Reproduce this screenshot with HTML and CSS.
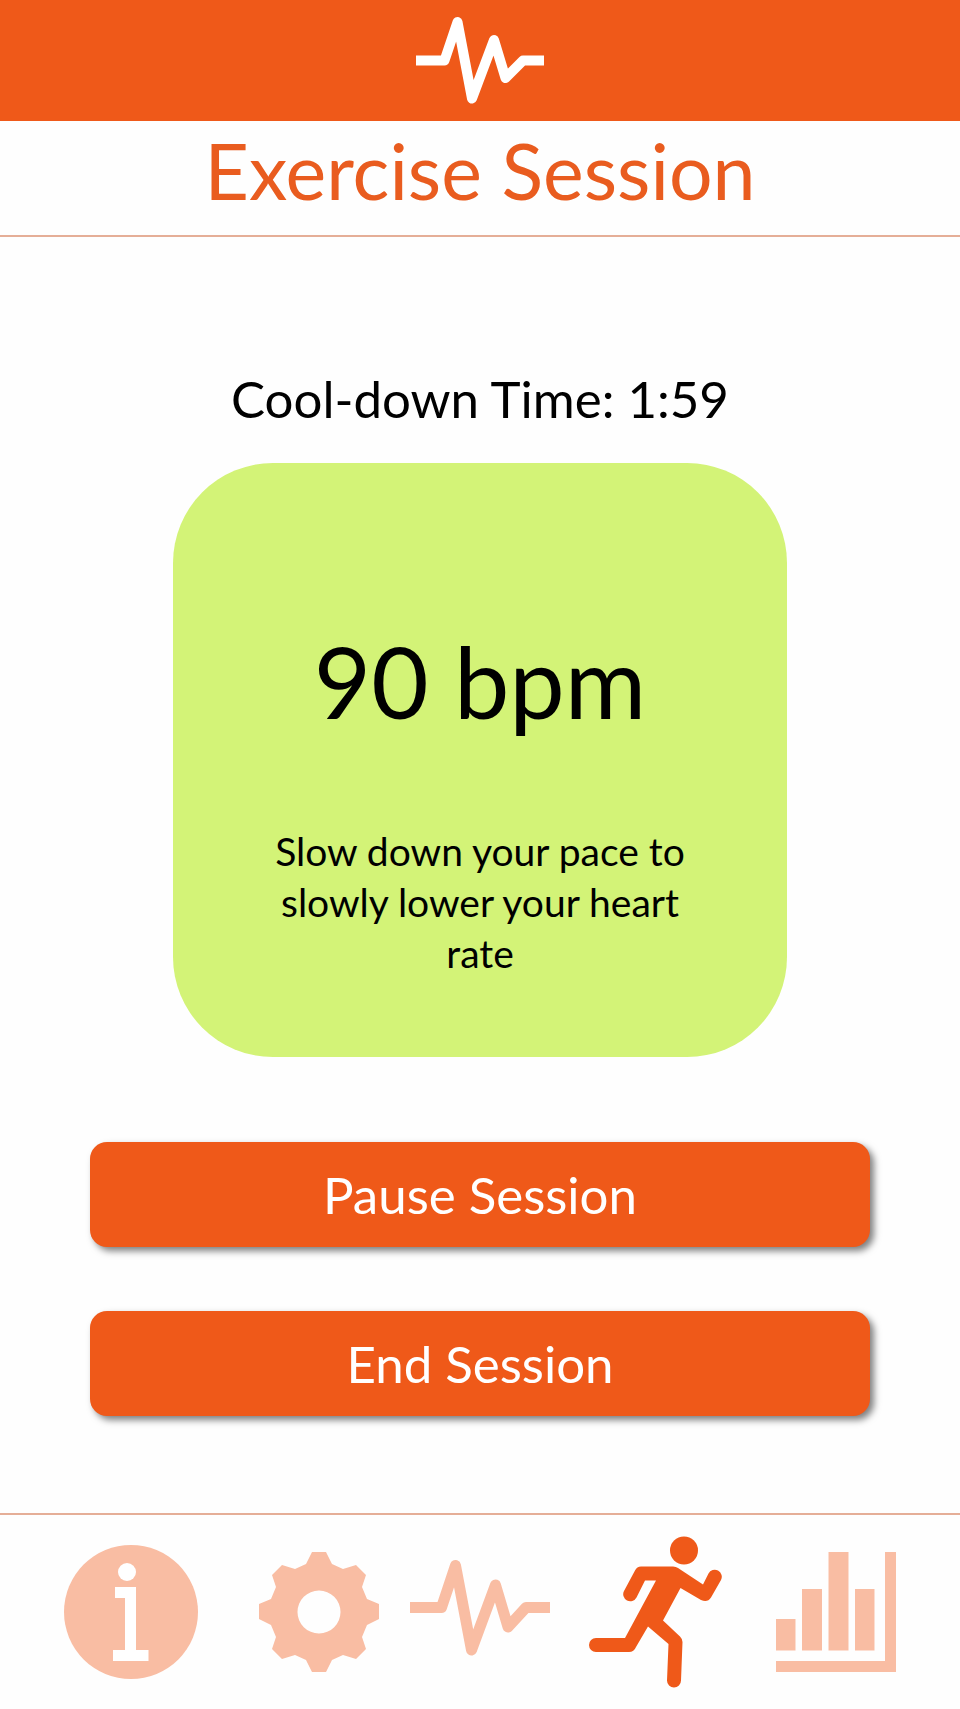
FILE: index.html
```html
<!DOCTYPE html>
<html lang="en">
<head>
<meta charset="utf-8">
<meta name="viewport" content="width=device-width, initial-scale=1">
<title>Exercise Session</title>
<link rel="stylesheet" href="styles.css">
</head>
<body>
<div class="app">
  <header class="brand">
    <svg class="brand-logo" viewBox="0 0 128 88" role="img" aria-label="Heart rate">
      <path d="M0 44H28.500L41.500 5.500L56 82L78 23.500L89.500 61.500L107 44H128" fill="none" stroke="currentColor" stroke-width="10" stroke-linejoin="round"/>
    </svg>
  </header>
  <h1 class="title">Exercise Session</h1>
  <main class="session">
    <p class="timer">Cool-down Time: 1:59</p>
    <section class="card">
      <p class="rate">90 bpm</p>
      <p class="advice">Slow down your pace to slowly lower your heart rate</p>
    </section>
    <div class="actions">
      <button class="action" type="button">Pause Session</button>
      <button class="action" type="button">End Session</button>
    </div>
  </main>
  <nav class="tabs" aria-label="Main">
    <a class="tab" href="#info" aria-label="Information">
      <svg width="134" height="134" viewBox="0 0 134 134">
        <circle cx="67" cy="67" r="67" fill="currentColor"/>
        <circle cx="63" cy="27" r="9" fill="#fff"/>
        <path d="M51 42H72V105H84.500V116H49V105H61V53H51Z" fill="#fff"/>
      </svg>
    </a>
    <a class="tab" href="#settings" aria-label="Settings">
      <svg width="120" height="120" viewBox="0 0 120 120">
        <path fill="currentColor" fill-rule="evenodd" d="M53 0H67L73 12L84 17L97 13L107 23L103 35L108 47L120 52V67L108 73L103 85L107 97L97 107L84 103L73 108L67 120H53L47 108L36 103L23 107L13 97L17 85L12 73L0 67V52L12 47L17 35L13 23L23 13L36 17L47 12ZM60 38.500A21.500 21.500 0 1 0 60 81.500A21.500 21.500 0 1 0 60 38.500Z"/>
      </svg>
    </a>
    <a class="tab" href="#heart" aria-label="Heart rate">
      <svg width="140" height="104" viewBox="0 0 140 104">
        <path d="M0 47.500H31.500L45.500 5.500L61.500 90L85.500 25L98 67L116 47.500H140" fill="none" stroke="currentColor" stroke-width="11" stroke-linejoin="round"/>
      </svg>
    </a>
    <a class="tab tab-active" href="#exercise" aria-label="Exercise" aria-current="page">
      <svg width="134" height="152" viewBox="0 0 134 152">
        <circle cx="95" cy="14.500" r="14" fill="currentColor"/>
        <path fill="currentColor" d="M52 30.500H84Q87 30.500 89 32L114 48.500L119.500 37.500A7 7 0 0 1 132 44L122 61.500Q118.500 67 112 64L91.500 52L74 84.500L91 100.500Q93.500 103 93.500 106L92 144.500A7 7 0 0 1 78 144.500L79.500 108L59 90.500L47 111Q45 116 40 116H7A7 7 0 0 1 7 102H36L67 44.500H56L47.500 61.500A7 7 0 0 1 35 55L46 34.500Q48 30.500 52 30.500Z"/>
      </svg>
    </a>
    <a class="tab" href="#stats" aria-label="Statistics">
      <svg width="120" height="120" viewBox="0 0 120 120">
        <path fill="currentColor" d="M0 67H19.500V98.500H0ZM26 37H46V98.500H26ZM52.500 0H72.500V98.500H52.500ZM79 37H98.500V98.500H79ZM109 0H120V120H0V109H109Z"/>
      </svg>
    </a>
  </nav>
</div>
</body>
</html>
```
FILE: styles.css
```css
* {
  box-sizing: border-box;
}

body {
  margin: 0;
  background: #fefefe;
  color: #000;
  font-family: Lato, "Liberation Sans", sans-serif;
}

h1,
p {
  margin: 0;
  font-weight: 400;
}

.app {
  display: flex;
  flex-direction: column;
  min-height: 100vh;
}

.brand {
  display: flex;
  justify-content: center;
  padding: 16px 0;
  background: #ef5919;
  color: #fff;
}

.brand-logo {
  width: 128px;
  height: 89px;
}

.title {
  padding: 4px 0 20px;
  border-bottom: 2px solid #e5ae97;
  color: #e95c1f;
  font-size: 77px;
  line-height: 90px;
  text-align: center;
}

.session {
  flex: 1;
  display: flex;
  flex-direction: column;
  align-items: center;
  padding: 132px 90px 96px;
}

.timer {
  font-size: 51px;
  line-height: 60px;
}

.card {
  width: 100%;
  max-width: 614px;
  margin-top: 34px;
  padding: 154px 90px 78px;
  border-radius: 100px;
  background: #d3f377;
  text-align: center;
}

.rate {
  font-size: 99px;
  line-height: 128px;
}

.advice {
  margin-top: 81px;
  font-size: 39px;
  line-height: 51px;
}

.actions {
  display: flex;
  flex-direction: column;
  gap: 64px;
  width: 100%;
  margin-top: 85px;
}

.action {
  width: 100%;
  padding: 20px;
  border: 0;
  border-radius: 17px;
  background: #ef5919;
  box-shadow: 4px 4px 7px rgba(0, 0, 0, 0.5);
  color: #fff;
  font-family: inherit;
  font-size: 51px;
  line-height: 65px;
}

.tabs {
  display: grid;
  grid-template-columns: 197fr 180fr 142fr 210fr 150fr;
  align-items: center;
  justify-items: center;
  padding: 21px 49px 21px 32px;
  border-top: 2px solid #e5ae97;
}

.tab {
  display: flex;
  color: #f9bda3;
}

.tab-active {
  color: #ef5919;
}
```
